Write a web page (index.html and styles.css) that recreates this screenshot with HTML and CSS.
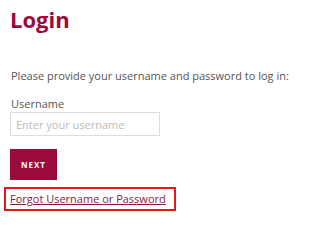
FILE: index.html
```html
<!DOCTYPE html>
<html>
<head>
<meta charset="utf-8">
<link rel="stylesheet" href="styles.css">
</head>
<body>
<main class="page">
  <h1 class="title">Login</h1>
  <p class="intro">Please provide your username and password to log in:</p>
  <label class="label" for="username">Username</label>
  <input class="field" id="username" type="text" placeholder="Enter your username">
  <button class="next" type="button">NEXT</button>
  <div class="forgot-box"><a class="forgot" href="#">Forgot Username or Password</a></div>
</main>
</body>
</html>
```
FILE: styles.css
```css
html, body {
  margin: 0;
  padding: 0;
  background: #fff;
}
.page {
  font-family: "Open Sans", "Noto Sans", sans-serif;
  padding: 6px 0 0 10px;
  display: flex;
  flex-direction: column;
  align-items: flex-start;
}
.title {
  margin: 0;
  font-size: 22px;
  line-height: 26px;
  font-weight: 700;
  color: #9b0a3c;
}
.intro {
  margin: 37px 0 0 1px;
  font-size: 11px;
  line-height: 14px;
  color: #555;
}
.label {
  margin: 14px 0 0 1px;
  font-size: 11px;
  line-height: 14px;
  color: #555;
}
.field {
  margin: 1px 0 0 0;
  box-sizing: border-box;
  width: 150px;
  height: 24px;
  border: 1px solid #ddd;
  padding: 0 5px;
  font-family: inherit;
  font-size: 11px;
  color: #555;
  outline: none;
}
.field::placeholder {
  color: #bbb;
}
.next {
  margin: 13px 0 0 0;
  width: 47px;
  height: 31px;
  border: none;
  background: #9b0a3c;
  color: #fff;
  font-family: inherit;
  font-size: 8px;
  font-weight: 700;
  letter-spacing: 1px;
  padding: 0;
}
.forgot-box {
  margin: 7px 0 0 -6px;
  border: 2px solid #e8141c;
  padding: 3px 8px 3px 4px;
  font-size: 11px;
  line-height: 14px;
}
.forgot {
  color: #8a1a44;
  text-decoration: underline;
}
```
